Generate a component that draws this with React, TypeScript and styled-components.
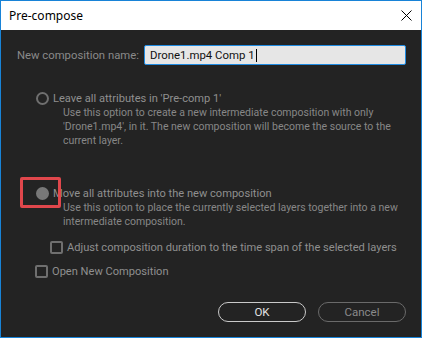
import styled, { createGlobalStyle } from "styled-components";

// GLOBAL ----------------------------------->

const GlobalStyle = createGlobalStyle`
  html, body {
    margin: 0;
    padding: 0;
    background: #ffffff;
  }
  * {
    box-sizing: border-box;
  }
`;

const UI_FONT = `Roboto, "Open Sans", sans-serif`;

// STYLED COMPONENTS FOR PreCompose ----------------------------------->

const Window = styled.div`
  width: 422px;
  height: 338px;
  border: 1px solid #1883d7;
  display: flex;
  flex-direction: column;
  overflow: hidden;
  font-family: ${UI_FONT};
`;

const TitleBar = styled.div`
  height: 29px;
  flex-shrink: 0;
  background: #ffffff;
  display: flex;
  align-items: center;
  justify-content: space-between;
  padding: 0 9px 0 8px;
`;

const Title = styled.span`
  font-family: "Noto Sans", sans-serif;
  font-size: 12px;
  color: #000000;
`;

const CloseButton = styled.svg`
  width: 11px;
  height: 11px;
`;

const Body = styled.div`
  flex: 1;
  background: #232323;
  padding: 15px 15px 0 16px;
  display: flex;
  flex-direction: column;
`;

const NameRow = styled.div`
  display: flex;
  align-items: center;
`;

const Label = styled.span`
  font-size: 11.3px;
  color: #8a8a8a;
  white-space: nowrap;
`;

const NameInput = styled.div`
  margin-left: auto;
  width: 262px;
  height: 20px;
  flex-shrink: 0;
  background: #e6e6e6;
  border: 1px solid #1f8be2;
  border-radius: 2px;
  display: flex;
  align-items: center;
  padding-left: 5px;
  font-size: 11.4px;
  color: #111111;
`;

const Caret = styled.span`
  display: inline-block;
  width: 1px;
  height: 13px;
  background: #000000;
  margin-left: 1px;
`;

const Option = styled.div<{ $top: number; $indent: number }>`
  position: relative;
  margin-top: ${(p) => p.$top}px;
  margin-left: ${(p) => p.$indent}px;
  display: flex;
  align-items: center;
  gap: 4px;
  height: 16px;
`;

const Radio = styled.span<{ $checked?: boolean }>`
  flex-shrink: 0;
  width: 13px;
  height: 13px;
  border-radius: 50%;
  border: 2px solid ${(p) => (p.$checked ? "#787878" : "#6f6f6f")};
  background: ${(p) => (p.$checked ? "#787878" : "transparent")};
`;

const Check = styled.span`
  flex-shrink: 0;
  width: 13px;
  height: 13px;
  border: 2px solid #6f6f6f;
  border-radius: 2px;
`;

const OptionText = styled.span`
  font-size: 11.1px;
  color: #8f8f8f;
  white-space: nowrap;
`;

const Description = styled.p`
  margin: 0 0 0 46px;
  font-size: 10.5px;
  line-height: 14px;
  color: #878787;
  white-space: nowrap;
`;

const Highlight = styled.span`
  position: absolute;
  left: -16px;
  top: -8px;
  width: 41px;
  height: 31px;
  border: 3px solid #e0474c;
  border-radius: 2px;
`;

const Buttons = styled.div`
  margin-top: 23px;
  display: flex;
  justify-content: flex-end;
  gap: 12px;
`;

const Button = styled.button<{ $primary?: boolean }>`
  width: 88px;
  height: 20px;
  border-radius: 10px;
  background: transparent;
  border: 1px solid ${(p) => (p.$primary ? "#c9c9c9" : "#6a6a6a")};
  color: ${(p) => (p.$primary ? "#e2e2e2" : "#8a8a8a")};
  font-family: ${UI_FONT};
  font-size: 11.5px;
  padding: 0;
  line-height: 18px;
`;

// FUNCTIONAL COMPONENT ----------------------------------->

const App = () => {
  return (
    <>
      <GlobalStyle />
      <Window>
        <TitleBar>
          <Title>Pre-compose</Title>
          <CloseButton viewBox="0 0 11 11">
            <path d="M0.5 0.5 L10.5 10.5 M10.5 0.5 L0.5 10.5" stroke="#000" strokeWidth="1" />
          </CloseButton>
        </TitleBar>
        <Body>
          <NameRow>
            <Label>New composition name:</Label>
            <NameInput>
              Drone1.mp4 Comp 1<Caret />
            </NameInput>
          </NameRow>

          <Option $top={25} $indent={19}>
            <Radio />
            <OptionText>Leave all attributes in 'Pre-comp 1'</OptionText>
          </Option>
          <Description>
            Use this option to create a new intermediate composition with only
            <br />
            'Drone1.mp4', in it. The new composition will become the source to the
            <br />
            current layer.
          </Description>

          <Option $top={37} $indent={19}>
            <Highlight />
            <Radio $checked />
            <OptionText>Move all attributes into the new composition</OptionText>
          </Option>
          <Description>
            Use this option to place the currently selected layers together into a new
            <br />
            intermediate composition.
          </Description>

          <Option $top={10} $indent={33}>
            <Check />
            <OptionText>Adjust composition duration to the time span of the selected layers</OptionText>
          </Option>

          <Option $top={8} $indent={18}>
            <Check />
            <OptionText>Open New Composition</OptionText>
          </Option>

          <Buttons>
            <Button $primary>OK</Button>
            <Button>Cancel</Button>
          </Buttons>
        </Body>
      </Window>
    </>
  );
};

export default App;
